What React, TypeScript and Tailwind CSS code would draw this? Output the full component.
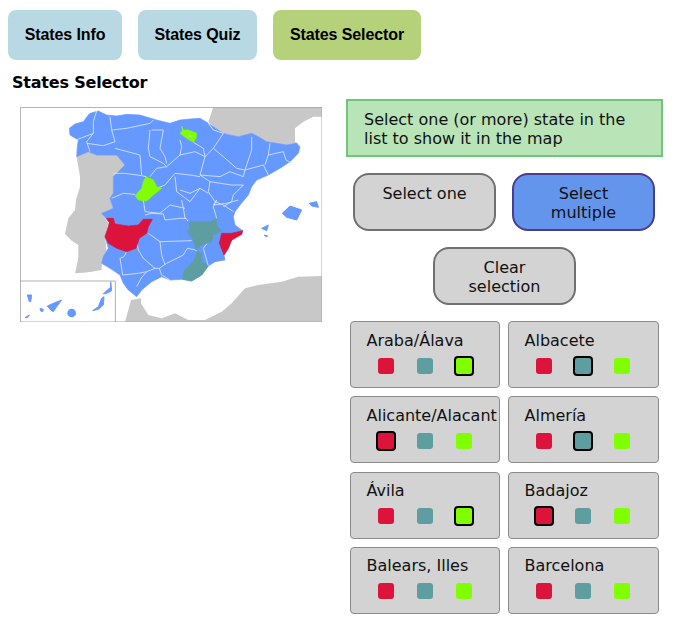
const BLUE_COAST =
  '208,385 225,372 250,365 265,345 270,340 295,333 320,345 350,348 380,343 420,345 470,360 510,370 540,360 570,357 600,355 625,370 640,380 670,400 690,405 715,410 755,400 778,412 800,425 830,430 860,435 890,430 900,440 895,460 870,485 840,505 805,525 770,540 755,560 745,585 720,615 705,635 700,650 705,675 728,692 725,703 695,720 685,745 672,765 675,780 645,785 625,798 605,825 575,843 548,838 510,840 485,830 455,845 425,870 410,890 385,870 370,850 360,825 330,805 305,790 310,770 325,745 315,710 325,680 328,668 305,640 340,625 330,595 340,580 340,530 375,495 350,465 290,465 265,455 230,470 232,440 235,420 210,405';

const PORTUGAL =
  '230,470 265,455 290,465 350,465 375,495 340,530 340,580 330,595 340,625 305,640 325,670 315,710 320,755 305,790 305,810 275,815 250,818 225,820 232,790 235,770 235,735 215,722 195,702 205,655 225,630 228,600 240,560 240,530';
const FRANCE =
  '640,321 966,321 966,350 940,350 910,365 885,385 885,425 895,432 860,435 830,430 800,425 755,400 715,410 670,400 640,380 625,365';
const AFRICA =
  '375,966 393,900 423,895 423,910 445,945 485,955 525,940 565,960 615,960 665,935 695,910 735,865 775,855 845,845 895,830 966,828 966,966';

const REGIONS = [
  { color: '#dc143c', points: '320,655 340,655 345,672 385,678 415,675 430,658 457,658 445,680 440,700 418,715 408,745 380,755 350,745 325,730 315,710 325,680 328,668' },
  { color: '#dc143c', points: '665,700 695,700 728,692 725,703 695,720 685,745 672,765 658,730' },
  { color: '#5f9ea0', points: '565,665 600,665 630,665 648,655 652,680 665,692 640,705 635,725 605,735 588,750 580,720 562,695 570,685' },
  { color: '#5f9ea0', points: '590,755 605,760 605,785 625,798 605,825 575,843 548,838 550,815 570,795 585,775' },
  { color: '#7fff00', points: '545,378 550,390 565,390 590,400 588,415 580,427 560,415 540,400 547,392' },
  { color: '#7fff00', points: '438,530 460,540 470,560 485,565 460,585 440,603 415,600 405,587 425,565 430,545' },
];

// province borders, hand traced
const BORDERS = [
  '290,333 280,365 280,400 228,420',
  '280,400 260,425 270,455',
  '260,430 310,437 345,425 335,390 330,350',
  '335,390 380,385 450,370 460,360',
  '450,390 445,445 450,470 490,490 500,500',
  '345,445 420,465 425,525',
  '455,390 490,390 480,445 495,470 500,490',
  '340,520 375,520 425,527 438,530',
  '500,500 470,505 450,530',
  '335,595 370,580 405,583',
  '470,565 495,555 525,520 570,525 600,530',
  '525,530 530,575 570,605',
  '430,600 435,635 480,640 510,615 555,625',
  '540,465 585,455 615,470 600,525 630,545',
  '540,420 545,440 540,465 500,500',
  '580,427 610,445 615,470',
  '625,370 640,390 670,400 640,445 670,470 710,505 735,510 755,450 755,410',
  '640,445 615,470',
  '735,510 790,495 805,525',
  '810,430 805,465 795,495',
  '805,465 850,455 858,480 875,490',
  '600,525 660,530 690,515 730,530 735,510',
  '630,545 625,575 645,605 670,615 700,635',
  '630,545 695,555 730,555 700,585 695,605 670,620',
  '540,570 570,580 600,565 625,580',
  '570,605 600,565',
  '640,615 650,600 640,620 650,655',
  '640,615 680,610 715,600',
  '435,645 455,640 490,642 495,660 540,655 558,655 565,665',
  '555,655 550,625 545,600',
  '445,700 480,725 575,722',
  '410,720 415,750 430,775 465,805',
  '480,725 485,765 495,795',
  '478,805 500,790 550,765 562,745 588,750',
  '465,805 478,805 485,825 510,840',
  '380,755 372,770 360,775 368,825 415,820 440,815 465,805',
  '440,815 425,832 410,860',
  '590,755 588,750',
  '625,798 610,745 640,705',
];

const ISLANDS = [
  '847,640 870,618 905,630 890,660 860,652',
  '928,610 950,605 955,622 935,618',
  '785,685 805,675 800,692',
  '793,705 803,708 797,710',
  '82,885 95,885 92,905 88,905',
  '120,925 130,928 128,935 122,933',
  '142,918 160,910 185,900 170,920 160,935 152,930',
  '278,932 295,920 305,895 312,890 310,915 295,928',
  '310,882 322,870 332,862 332,845 335,872 320,880',
  '75,953 88,945 82,953',
];

function SpainMap() {
  return (
    <svg viewBox="60 321 906 645" className="block w-[302px] h-[215px] bg-white">
      <polygon points={PORTUGAL} fill="#c8c8c8" />
      <polygon points={FRANCE} fill="#c8c8c8" />
      <polygon points={AFRICA} fill="#c8c8c8" />
      <polygon points={BLUE_COAST} fill="#6699ff" stroke="#6699ff" strokeWidth="2" strokeLinejoin="round" />
      {BORDERS.map((b) => (
        <polyline key={b} points={b} fill="none" stroke="#dbe6ff" strokeWidth="2.5" strokeLinejoin="round" />
      ))}
      {REGIONS.map((r) => (
        <polygon key={r.points} points={r.points} fill={r.color} stroke={r.color} strokeWidth="2" strokeLinejoin="round" />
      ))}
      <circle cx="570" cy="408" r="3" fill="#dbe6ff" />
      {ISLANDS.map((i) => (
        <polygon key={i} points={i} fill="#6699ff" stroke="#6699ff" strokeWidth="3" strokeLinejoin="round" />
      ))}
      <circle cx="215" cy="939" r="13" fill="#6699ff" />
      <polyline points="60,843 346,843 346,966" fill="none" stroke="#b0b0b0" strokeWidth="3" />
      <polyline points="61,966 61,322 966,322 966,966 61,966" fill="none" stroke="#a6a6a6" strokeWidth="3" />
    </svg>
  );
}

const STATES = [
  { name: 'Araba/Álava', selected: 2 },
  { name: 'Albacete', selected: 1 },
  { name: 'Alicante/Alacant', selected: 0 },
  { name: 'Almería', selected: 1 },
  { name: 'Ávila', selected: 2 },
  { name: 'Badajoz', selected: 0 },
  { name: 'Balears, Illes', selected: -1 },
  { name: 'Barcelona', selected: -1 },
];

const SWATCHES = ['bg-[#dc143c]', 'bg-[#5f9ea0]', 'bg-[#7fff00]'];

function StateCard({ name, selected }: { name: string; selected: number }) {
  return (
    <div className="h-[67px] rounded border border-[#8a8a8a] bg-[#d3d3d3] pl-[15.5px] pt-[8.5px] overflow-hidden">
      <div className="leading-[19px] whitespace-nowrap">{name}</div>
      <div className="flex mt-[8px] pl-[11px] gap-[23.3px]">
        {SWATCHES.map((color, i) => (
          <div key={color} className="w-4 h-4 flex items-center justify-center">
            <div
              className={
                i === selected
                  ? `shrink-0 w-5 h-5 rounded-[4px] border-2 border-black ${color}`
                  : `shrink-0 w-4 h-4 rounded-[3px] ${color}`
              }
            />
          </div>
        ))}
      </div>
    </div>
  );
}

export default function App() {
  return (
    <div className="w-[674px] h-[618px] overflow-hidden bg-white text-[#111] font-['DejaVu_Sans',sans-serif] text-base">
      {/* Tabs */}
      <div className="flex gap-4 pl-2 pt-2.5 font-['Liberation_Sans',sans-serif] font-bold text-black tracking-[-0.1px]">
        <button className="h-[50px] w-[114px] rounded-lg bg-[#b8d8e3]">States Info</button>
        <button className="h-[50px] w-[119px] rounded-lg bg-[#b8d8e3]">States Quiz</button>
        <button className="h-[50px] w-[148px] rounded-lg bg-[#b5d17a]">States Selector</button>
      </div>

      <div className="flex">
        <div className="w-[346px] shrink-0">
          <h2 className="pl-3 pt-[13px] font-bold leading-[19px] text-black tracking-[-0.2px]">States Selector</h2>
          <div className="pl-5 pt-[15px]">
            <SpainMap />
          </div>
        </div>

        <div className="w-[317px] pt-[39px]">
          <div className="h-[58px] border-2 border-[#6fc77a] bg-[#b8e4b8] pl-4 pr-[26px] pt-[9px] leading-[19px]">
            Select one (or more) state in the list to show it in the map
          </div>

          <div className="flex gap-4 pl-[7px] pt-4">
            <button className="h-[58px] w-[143px] rounded-2xl border-2 border-[#707070] bg-[#d3d3d3] pt-[9px] px-4 leading-[19px] flex flex-col items-center">
              Select one
            </button>
            <button className="h-[58px] w-[143px] rounded-2xl border-2 border-[#483d8b] bg-[#6495ed] pt-[9px] px-4 leading-[19px] flex flex-col items-center">
              Select multiple
            </button>
          </div>
          <div className="flex pl-[87px] pt-4">
            <button className="h-[58px] w-[143px] rounded-2xl border-2 border-[#707070] bg-[#d3d3d3] pt-[9px] px-4 leading-[19px] flex flex-col items-center">
              Clear selection
            </button>
          </div>

          <div className="grid grid-cols-[150px_151px] gap-x-2 gap-y-[8.33px] pl-1 pt-4">
            {STATES.map((s) => (
              <StateCard key={s.name} name={s.name} selected={s.selected} />
            ))}
          </div>
        </div>
      </div>
    </div>
  );
}
